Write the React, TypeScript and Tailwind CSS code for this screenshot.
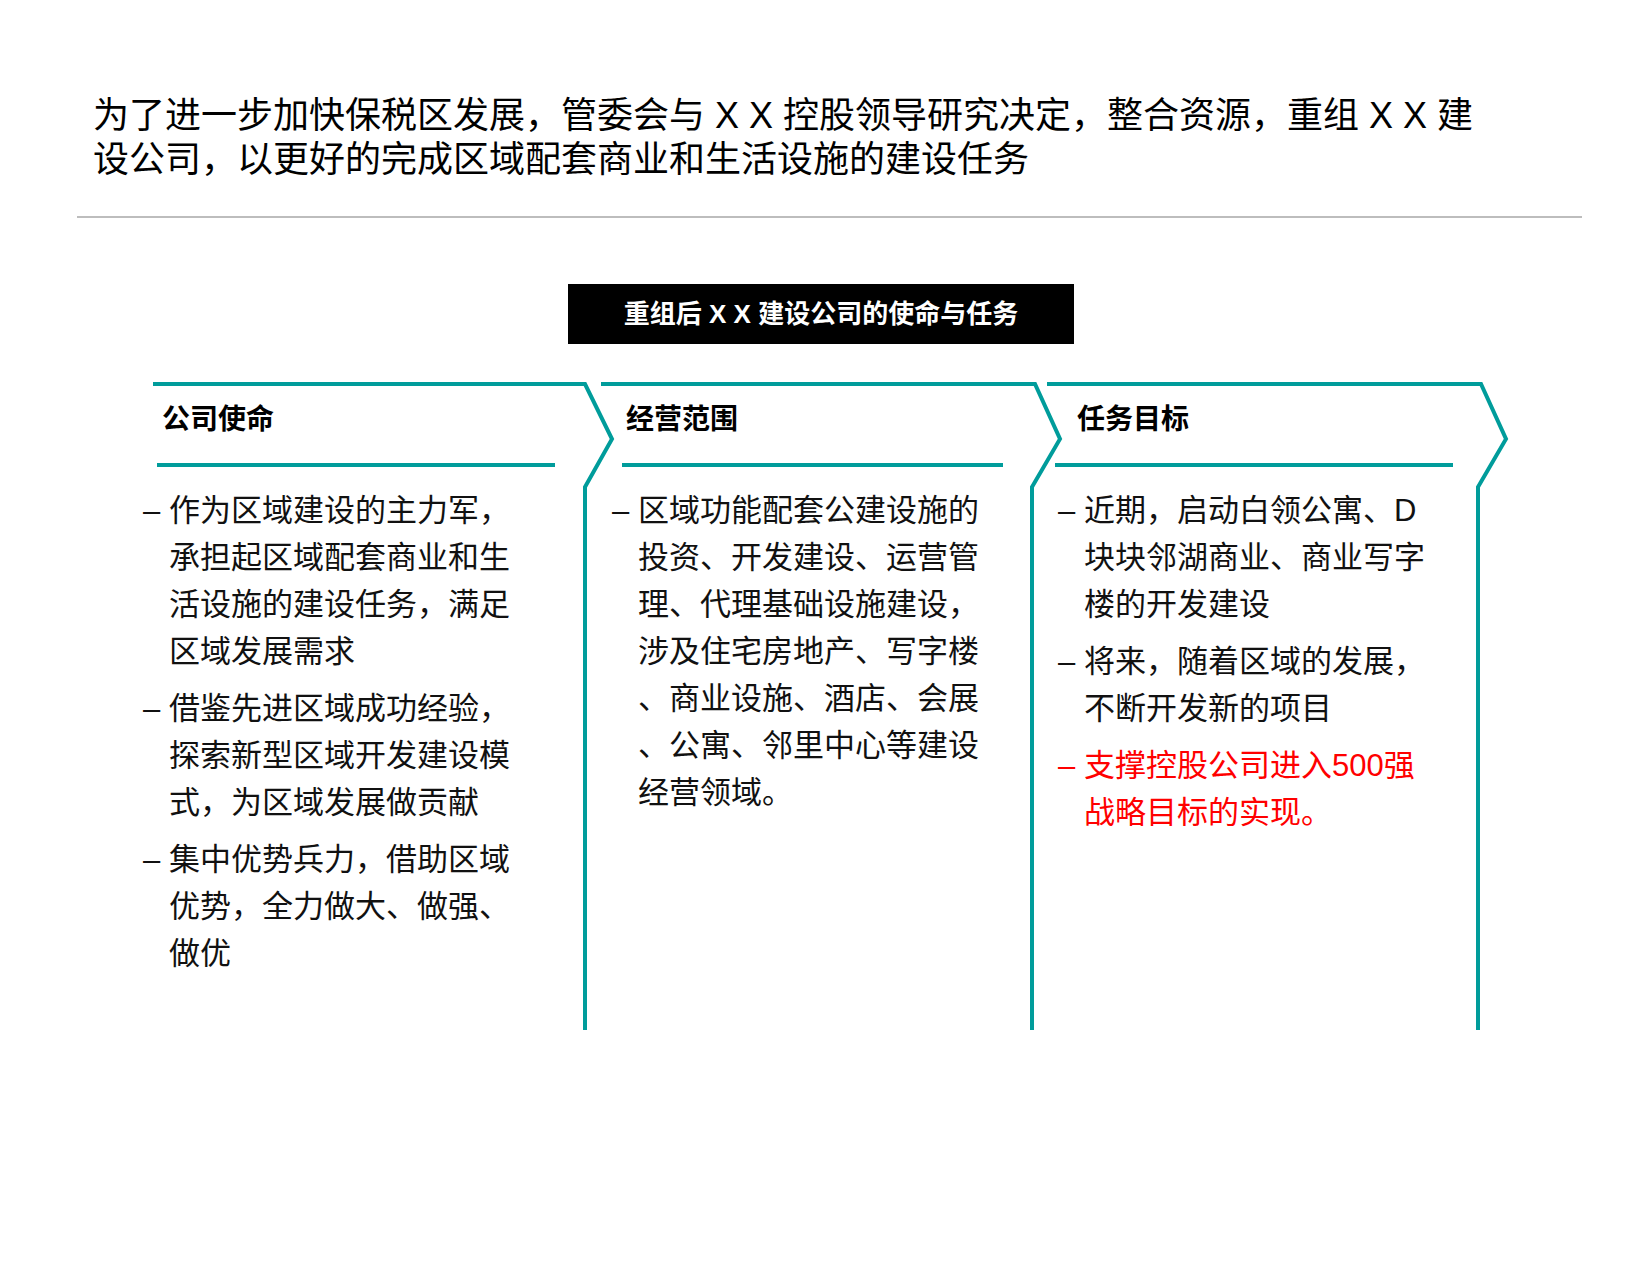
const font = { fontFamily: '"Liberation Sans", "Noto Sans CJK SC", sans-serif' };

function Bullet({ red, lines }: { red?: boolean; lines: string[] }) {
  return (
    <div className={`flex ${red ? "text-[#ff0000]" : "text-[#111]"}`}>
      <span className="w-[26px] shrink-0">–</span>
      <div>
        {lines.map((l, i) => (
          <div key={i}>{l}</div>
        ))}
      </div>
    </div>
  );
}

function Column({
  left,
  width,
  headX,
  lineL,
  lineR,
  title,
  children,
}: {
  left: number;
  width: number;
  headX: number;
  lineL: number;
  lineR: number;
  title: string;
  children: React.ReactNode;
}) {
  return (
    <div className="absolute top-0" style={{ left, width }}>
      <div className="h-[81px] flex items-end pb-[22px] text-[28px] font-bold text-black" style={{ paddingLeft: headX - left }}>
        {title}
      </div>
      <div className="h-[4px] bg-[#009c9b]" style={{ marginLeft: lineL - left, width: lineR - lineL }} />
      <div className="mt-[20px] flex flex-col gap-[10px] text-[31px] leading-[47px]">{children}</div>
    </div>
  );
}

export default function App() {
  return (
    <div className="relative w-[1650px] h-[1275px] bg-white overflow-hidden" style={font}>
      <div className="pl-[93px] pt-[94px] text-[36px] leading-[44px] text-black">
        <div>为了进一步加快保税区发展，管委会与 X X 控股领导研究决定，整合资源，重组 X X 建</div>
        <div>设公司，以更好的完成区域配套商业和生活设施的建设任务</div>
      </div>
      <div className="ml-[77px] mt-[34px] w-[1505px] h-[2px] bg-[#bdbdbd]" />
      <div className="ml-[568px] mt-[66px] w-[506px] h-[60px] bg-black text-white text-[26px] font-bold flex items-center justify-center">
        重组后 X X 建设公司的使命与任务
      </div>
      <div className="relative mt-[38px] h-[660px]">
        <svg className="absolute left-0 top-0" width="1650" height="660" viewBox="0 384 1650 660">
          <g fill="none" stroke="#009c9b" strokeWidth="4">
            <path d="M153 386 L585 386 L612 441 L585 489 L585 1032" />
            <path d="M601 386 L1035 386 L1060 441 L1032 489 L1032 1032" />
            <path d="M1047 386 L1481 386 L1506 441 L1478 489 L1478 1032" />
          </g>
        </svg>
        <Column left={143} width={440} headX={162} lineL={157} lineR={555} title="公司使命">
          <Bullet lines={["作为区域建设的主力军，", "承担起区域配套商业和生", "活设施的建设任务，满足", "区域发展需求"]} />
          <Bullet lines={["借鉴先进区域成功经验，", "探索新型区域开发建设模", "式，为区域发展做贡献"]} />
          <Bullet lines={["集中优势兵力，借助区域", "优势，全力做大、做强、", "做优"]} />
        </Column>
        <Column left={612} width={420} headX={626} lineL={622} lineR={1003} title="经营范围">
          <Bullet lines={["区域功能配套公建设施的", "投资、开发建设、运营管", "理、代理基础设施建设，", "涉及住宅房地产、写字楼", "、商业设施、酒店、会展", "、公寓、邻里中心等建设", "经营领域。"]} />
        </Column>
        <Column left={1058} width={420} headX={1077} lineL={1055} lineR={1453} title="任务目标">
          <Bullet lines={["近期，启动白领公寓、D", "块块邻湖商业、商业写字", "楼的开发建设"]} />
          <Bullet lines={["将来，随着区域的发展，", "不断开发新的项目"]} />
          <Bullet red lines={["支撑控股公司进入500强", "战略目标的实现。"]} />
        </Column>
      </div>
    </div>
  );
}
